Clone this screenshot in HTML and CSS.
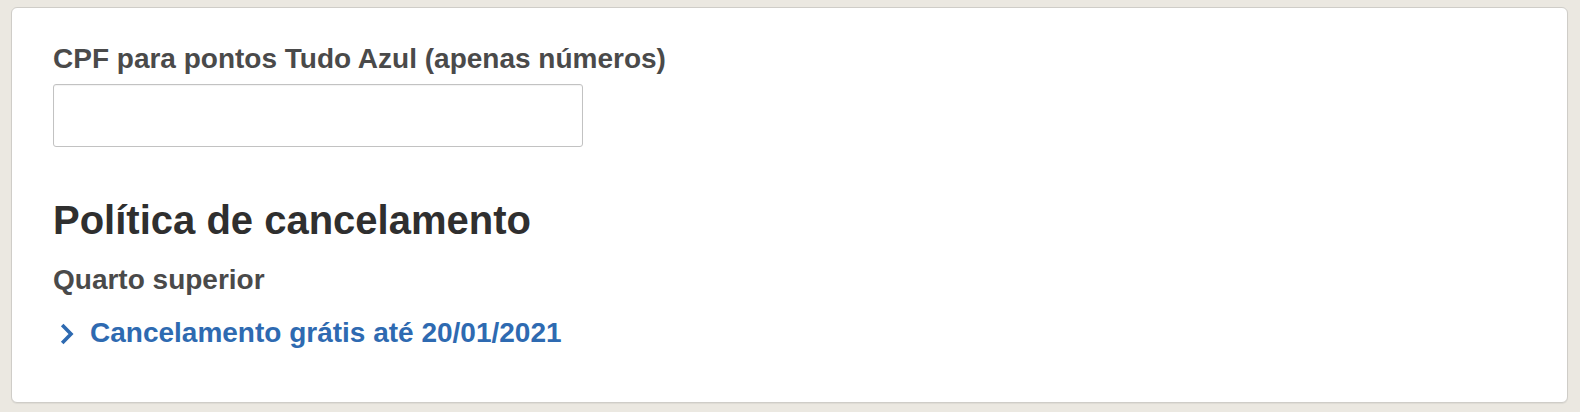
FILE: index.html
```html
<!DOCTYPE html>
<html lang="pt-BR">
<head>
<meta charset="utf-8">
<title>Política de cancelamento</title>
<link rel="stylesheet" href="styles.css">
</head>
<body>
  <section class="card">
    <div class="field">
      <label class="field-label" for="cpf">CPF para pontos Tudo Azul (apenas números)</label>
      <input class="field-input" id="cpf" type="text">
    </div>
    <h2 class="policy-title">Política de cancelamento</h2>
    <p class="room-name">Quarto superior</p>
    <a class="policy-link" href="#">
      <svg class="chevron" width="14" height="22" viewBox="0 0 14 22" aria-hidden="true">
        <polyline points="2.2,2 11,11 2.2,20" fill="none" stroke="#2e6ab1" stroke-width="3.6" stroke-linejoin="miter"/>
      </svg>
      <span>Cancelamento grátis até 20/01/2021</span>
    </a>
  </section>
</body>
</html>
```
FILE: styles.css
```css
html, body {
  margin: 0;
  padding: 0;
}
body {
  background: #ebe8e1;
  font-family: "Liberation Sans", Arial, Helvetica, sans-serif;
  padding: 7px 12px 9px 11px;
  height: 412px;
  box-sizing: border-box;
}
.card {
  background: #fff;
  border: 1px solid #cfcdc8;
  border-radius: 6px;
  box-shadow: 0 1px 1px rgba(0,0,0,0.06);
  height: 100%;
  box-sizing: border-box;
  padding: 35px 41px 0 41px;
  display: flex;
  flex-direction: column;
  align-items: flex-start;
}
.field {
  display: flex;
  flex-direction: column;
  align-items: flex-start;
}
.field-label {
  font-size: 28px;
  line-height: 32px;
  font-weight: bold;
  color: #4a4a4a;
  margin-bottom: 9px;
}
.field-input {
  width: 530px;
  height: 63px;
  box-sizing: border-box;
  border: 1px solid #c2c2c2;
  border-radius: 3px;
  box-shadow: inset 0 1px 1px rgba(0,0,0,0.05);
  margin: 0;
  padding: 0 12px;
  font-size: 24px;
  background: #fff;
}
.policy-title {
  margin: 50px 0 0 0;
  font-size: 40px;
  line-height: 46px;
  font-weight: bold;
  color: #2f2f2f;
}
.room-name {
  margin: 21px 0 0 0;
  font-size: 28px;
  line-height: 32px;
  font-weight: bold;
  color: #4a4a4a;
}
.policy-link {
  margin-top: 21px;
  display: flex;
  align-items: center;
  gap: 16px;
  font-size: 28px;
  line-height: 32px;
  font-weight: bold;
  color: #2e6ab1;
  text-decoration: none;
}
.chevron {
  margin-left: 7px;
  margin-top: 1px;
  flex: none;
}
```
